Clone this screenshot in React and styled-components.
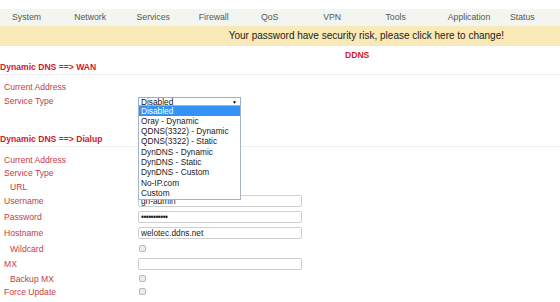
import React from "react";
import styled, { createGlobalStyle } from "styled-components";

const GlobalStyle = createGlobalStyle`
  body {
    margin: 0;
    background: #fff;
    font-family: "Liberation Sans", Arial, sans-serif;
  }
`;

// Top menu + warning strip

const Page = styled.div`
  width: 560px;
  height: 302px;
  overflow: hidden;
  padding-top: 9px;
  box-sizing: border-box;
`;

const Nav = styled.div`
  display: grid;
  grid-template-columns: repeat(9, 62.25px);
  padding-left: 12px;
  height: 17px;
  line-height: 17px;
  background: #f3f6f0;
  font-size: 8.7px;
  color: #555;
`;

const Banner = styled.div`
  height: 20px;
  line-height: 20px;
  background: #f9e9b6;
  text-align: right;
  padding-right: 56px;
  font-size: 10px;
  color: #222;
  cursor: pointer;
`;

const Title = styled.div`
  height: 14px;
  line-height: 14px;
  padding-top: 2px;
  box-sizing: border-box;
  padding-left: 345px;
  font-size: 8.6px;
  font-weight: bold;
  color: #d0182e;
`;

// Sections

const SectionHead = styled.div`
  height: 15px;
  box-sizing: border-box;
  margin-top: ${p => p.$top || 0}px;
  border-bottom: 1px solid #eeeeee;
  display: flex;
  align-items: center;
  font-size: 8.6px;
  font-weight: bold;
  color: #d0182e;
`;

const Rows = styled.div`
  display: flex;
  flex-direction: column;
  margin-top: ${p => p.$top}px;
`;

const Row = styled.div`
  display: grid;
  grid-template-columns: 138px 1fr;
  align-items: center;
  height: ${p => p.$h}px;
`;

const Label = styled.div`
  padding-left: ${p => (p.$indent ? 10 : 4)}px;
  font-size: 8.6px;
  color: #c73a48;
`;

const Cell = styled.div`
  position: relative;
  display: flex;
  align-items: center;
`;

const TextInput = styled.input`
  width: 164px;
  height: 12px;
  box-sizing: border-box;
  border: 1px solid #cfcfcf;
  border-radius: 2px;
  padding: 0 2px;
  font-family: "Liberation Sans", Arial, sans-serif;
  font-size: 8.3px;
  letter-spacing: ${p => (p.type === "password" ? "-0.5px" : "normal")};
  color: #222;
  outline: none;
`;

const Check = styled.input`
  appearance: none;
  margin: 0 0 0 1px;
  width: 7px;
  height: 7px;
  border: 1px solid #b9b9b9;
  border-radius: 2px;
  background: #ececec;
  box-sizing: border-box;
`;

// Service type select with its opened list

const SelectBox = styled.div`
  width: 103px;
  height: 9px;
  box-sizing: border-box;
  border: 1px solid #8fb0d8;
  border-bottom: none;
  display: flex;
  align-items: center;
  justify-content: space-between;
  padding: 1px 3px 0 2px;
  font-size: 8.3px;
  color: #111;
`;

const Arrow = styled.span`
  font-size: 5px;
  color: #000;
`;

const DropList = styled.div`
  position: absolute;
  top: 100%;
  left: 0;
  margin-top: -1px;
  width: 103px;
  box-sizing: border-box;
  border: 1px solid #a6b3c4;
  background: #fff;
  z-index: 5;
  padding-bottom: 1px;
`;

const Option = styled.div`
  height: 10.3px;
  line-height: 10.3px;
  padding-left: 2px;
  font-size: 8.3px;
  color: ${p => (p.$active ? "#fff" : "#222")};
  background: ${p => (p.$active ? "#3394f5" : "transparent")};
`;

const menu = ["System", "Network", "Services", "Firewall", "QoS", "VPN", "Tools", "Application", "Status"];

const serviceTypes = [
  "Disabled",
  "Oray - Dynamic",
  "QDNS(3322) - Dynamic",
  "QDNS(3322) - Static",
  "DynDNS - Dynamic",
  "DynDNS - Static",
  "DynDNS - Custom",
  "No-IP.com",
  "Custom"
];

function ServiceSelect() {
  return (
    <Cell>
      <SelectBox>
        <span>Disabled</span>
        <Arrow>▼</Arrow>
      </SelectBox>
      <DropList>
        {serviceTypes.map((t, i) => (
          <Option key={t} $active={i === 0}>
            {t}
          </Option>
        ))}
      </DropList>
    </Cell>
  );
}

export default function App() {
  return (
    <Page>
      <GlobalStyle />
      <Nav>
        {menu.map(m => (
          <span key={m}>{m}</span>
        ))}
      </Nav>
      <Banner>Your password have security risk, please click here to change!</Banner>
      <Title>DDNS</Title>

      <SectionHead>Dynamic DNS ==&gt; WAN</SectionHead>
      <Rows $top={5}>
        <Row $h={14}>
          <Label>Current Address</Label>
        </Row>
        <Row $h={14}>
          <Label>Service Type</Label>
          <ServiceSelect />
        </Row>
      </Rows>

      <SectionHead $top={24}>Dynamic DNS ==&gt; Dialup</SectionHead>
      <Rows $top={6}>
        <Row $h={13}>
          <Label>Current Address</Label>
        </Row>
        <Row $h={14}>
          <Label>Service Type</Label>
        </Row>
        <Row $h={13}>
          <Label $indent>URL</Label>
        </Row>
        <Row $h={16}>
          <Label>Username</Label>
          <Cell>
            <TextInput defaultValue="gn-admin" />
          </Cell>
        </Row>
        <Row $h={16}>
          <Label>Password</Label>
          <Cell>
            <TextInput type="password" defaultValue="12345678901" />
          </Cell>
        </Row>
        <Row $h={16}>
          <Label>Hostname</Label>
          <Cell>
            <TextInput defaultValue="welotec.ddns.net" />
          </Cell>
        </Row>
        <Row $h={15}>
          <Label $indent>Wildcard</Label>
          <Cell>
            <Check type="checkbox" />
          </Cell>
        </Row>
        <Row $h={16}>
          <Label>MX</Label>
          <Cell>
            <TextInput />
          </Cell>
        </Row>
        <Row $h={13}>
          <Label $indent>Backup MX</Label>
          <Cell>
            <Check type="checkbox" />
          </Cell>
        </Row>
        <Row $h={13}>
          <Label>Force Update</Label>
          <Cell>
            <Check type="checkbox" />
          </Cell>
        </Row>
      </Rows>
    </Page>
  );
}
